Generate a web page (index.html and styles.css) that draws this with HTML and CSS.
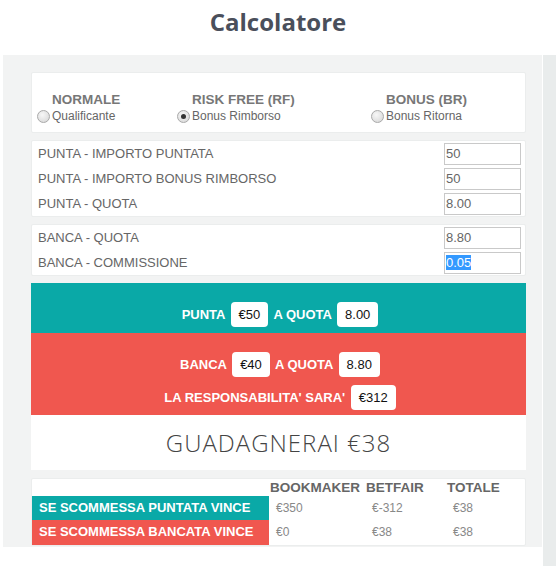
FILE: index.html
```html
<!DOCTYPE html>
<html lang="it">
<head>
    <meta charset="UTF-8">
    <meta name="viewport" content="width=device-width, initial-scale=1.0">
    <title>Calcolatore</title>
    <link rel="stylesheet" href="styles.css">
</head>
<body>
    <h1 class="title">Calcolatore</h1>

    <div class="layout">
        <div class="panel">
            <div class="card modes">
                <label class="mode">
                    <span class="mode-name">NORMALE</span>
                    <span class="mode-opt"><span class="radio"></span>Qualificante</span>
                </label>
                <label class="mode">
                    <span class="mode-name">RISK FREE (RF)</span>
                    <span class="mode-opt"><span class="radio checked"></span>Bonus Rimborso</span>
                </label>
                <label class="mode">
                    <span class="mode-name">BONUS (BR)</span>
                    <span class="mode-opt"><span class="radio"></span>Bonus Ritorna</span>
                </label>
            </div>

            <div class="card fields">
                <div class="row"><span>PUNTA - IMPORTO PUNTATA</span><input type="text" value="50"></div>
                <div class="row"><span>PUNTA - IMPORTO BONUS RIMBORSO</span><input type="text" value="50"></div>
                <div class="row"><span>PUNTA - QUOTA</span><input type="text" value="8.00"></div>
            </div>

            <div class="card fields">
                <div class="row"><span>BANCA - QUOTA</span><input type="text" value="8.80"></div>
                <div class="row"><span>BANCA - COMMISSIONE</span><input type="text" value="0.05" id="commissione"></div>
            </div>

            <div class="card result">
                <div class="band back">
                    <div class="line">PUNTA <span class="pill">€50</span> A QUOTA <span class="pill">8.00</span></div>
                </div>
                <div class="band lay">
                    <div class="line">BANCA <span class="pill">€40</span> A QUOTA <span class="pill">8.80</span></div>
                    <div class="line">LA RESPONSABILITA' SARA' <span class="pill">€312</span></div>
                </div>
                <div class="profit">GUADAGNERAI €38</div>
            </div>

            <div class="card summary">
                <div></div>
                <div class="head">BOOKMAKER</div>
                <div class="head">BETFAIR</div>
                <div class="head">TOTALE</div>

                <div class="case back">SE SCOMMESSA PUNTATA VINCE</div>
                <div class="val">€350</div>
                <div class="val">€-312</div>
                <div class="val">€38</div>

                <div class="case lay">SE SCOMMESSA BANCATA VINCE</div>
                <div class="val">€0</div>
                <div class="val">€38</div>
                <div class="val">€38</div>
            </div>
        </div>
        <div class="side"></div>
    </div>

    <script>
        // campo commissione selezionato
        const comm = document.getElementById('commissione');
        comm.focus();
        comm.select();
    </script>
</body>
</html>
```

FILE: styles.css
```css
body {
    margin: 0;
    font-family: "Liberation Sans", Arial, sans-serif;
    background-color: #fff;
}
.title {
    margin: 0;
    height: 55px;
    padding-top: 3px;
    box-sizing: border-box;
    font-family: "Open Sans", sans-serif;
    font-size: 24px;
    line-height: 38px;
    font-weight: 700;
    color: #4a4f5b;
    text-align: center;
}
.layout {
    display: flex;
    align-items: flex-start;
}
.panel {
    width: 539px;
    margin-left: 3px;
    padding: 17px 16px 1px 28px;
    box-sizing: border-box;
    background-color: #f2f3f3;
}
.side {
    width: 13px;
    height: 511px;
    margin-left: 1px;
    background-color: #e9ecec;
}
.card {
    background-color: #fff;
    border: 1px solid #ebeded;
    border-radius: 2px;
    margin-bottom: 7px;
}

/* tipo di scommessa */
.modes {
    display: grid;
    grid-template-columns: 140px 194px 1fr;
    padding: 18px 0 8px 5px;
}
.mode {
    display: flex;
    flex-direction: column;
}
.mode-name {
    padding-left: 15px;
    font-size: 13.5px;
    line-height: 17px;
    font-weight: 700;
    color: #777;
}
.mode-opt {
    display: flex;
    align-items: center;
    font-size: 12px;
    line-height: 16px;
    color: #666;
}
.radio {
    width: 11px;
    height: 11px;
    margin-right: 2px;
    border: 1px solid #a9a9a9;
    border-radius: 50%;
    background: radial-gradient(circle at 40% 35%, #f7f7f7, #d4d4d4);
    position: relative;
}
.radio.checked:after {
    content: '';
    position: absolute;
    left: 3px;
    top: 3px;
    width: 5px;
    height: 5px;
    border-radius: 50%;
    background-color: #333;
}

/* campi */
.fields {
    padding: 0 4px 0 6px;
}
.row {
    display: flex;
    align-items: center;
    justify-content: space-between;
    height: 25px;
    font-size: 13px;
    color: #666;
}
.row input {
    width: 77px;
    height: 22px;
    box-sizing: border-box;
    padding: 0 1px;
    border: 1px solid #c9c9c9;
    font-family: "Liberation Sans", Arial, sans-serif;
    font-size: 13px;
    color: #666;
    outline: none;
}
.row input::selection {
    background-color: #3399ff;
    color: #fff;
}

/* risultato */
.result {
    border: none;
    border-radius: 0;
    margin-bottom: 8px;
}
.band {
    display: flex;
    flex-direction: column;
    gap: 8px;
    padding: 19px 0 5px 5px;
    color: #fff;
    font-size: 13px;
    font-weight: 700;
    text-align: center;
}
.band.back {
    padding-bottom: 6px;
}
.back {
    background-color: #0aa9a7;
}
.lay {
    background-color: #f0574f;
}
.line {
    height: 25px;
    line-height: 25px;
}
.pill {
    display: inline-block;
    margin: 0 2px;
    padding: 0 8px;
    height: 25px;
    line-height: 25px;
    background-color: #fff;
    border-radius: 4px;
    color: #111;
    font-weight: 400;
    vertical-align: top;
}
.profit {
    height: 55px;
    line-height: 55px;
    text-align: center;
    font-family: "Open Sans", sans-serif;
    font-size: 24px;
    font-weight: 300;
    letter-spacing: 1px;
    color: #444;
}

/* riepilogo */
.summary {
    display: grid;
    grid-template-columns: 237px 96px 81px 1fr;
    grid-template-rows: 17px 24px 25px;
    margin-bottom: 0;
}
.head {
    padding-left: 1px;
    font-size: 13.5px;
    line-height: 17px;
    font-weight: 700;
    color: #666;
}
.case {
    padding-left: 7px;
    font-size: 13px;
    font-weight: 700;
    color: #fff;
    line-height: 24px;
}
.val {
    padding-left: 7px;
    font-size: 12px;
    line-height: 24px;
    color: #888;
}
```
